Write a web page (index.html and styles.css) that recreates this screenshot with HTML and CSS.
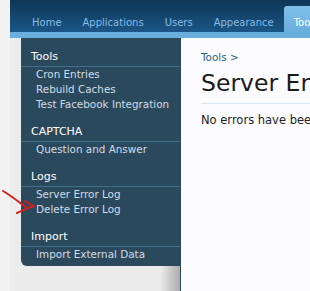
FILE: index.html
```html
<!DOCTYPE html>
<html lang="en">
<head>
    <meta charset="UTF-8">
    <title>Server Error Log</title>
    <link rel="stylesheet" href="styles.css">
</head>
<body>
    <div class="page">
        <nav class="tabs">
            <a class="tab">Home</a>
            <a class="tab">Applications</a>
            <a class="tab">Users</a>
            <a class="tab">Appearance</a>
            <a class="tab active">Tools</a>
        </nav>
        <div class="strip"></div>

        <div class="main">
            <aside class="sidebar">
                <h3>Tools</h3>
                <ul>
                    <li>Cron Entries</li>
                    <li>Rebuild Caches</li>
                    <li>Test Facebook Integration</li>
                </ul>
                <h3>CAPTCHA</h3>
                <ul>
                    <li>Question and Answer</li>
                </ul>
                <h3>Logs</h3>
                <ul>
                    <li>Server Error Log</li>
                    <li>Delete Error Log</li>
                </ul>
                <h3>Import</h3>
                <ul>
                    <li>Import External Data</li>
                </ul>
            </aside>
            <section class="content">
                <div class="crumbs">Tools &gt;</div>
                <h1>Server Error Log</h1>
                <p>No errors have been logged.</p>
            </section>
        </div>
    </div>

    <svg class="arrow" width="40" height="32" viewBox="0 0 40 32">
        <path d="M2 2 C9 6 18 13 26 19" fill="none" stroke="#d41f1a" stroke-width="2" stroke-linecap="round"/>
        <path d="M24 12 C27 14 30 16 33 17 C28 19 22 21 16 24" fill="none" stroke="#d41f1a" stroke-width="2" stroke-linecap="round" stroke-linejoin="round"/>
    </svg>
</body>
</html>
```

FILE: styles.css
```css
body {
  margin: 0;
  background: #f2f2f2;
  font-family: "DejaVu Sans", Tahoma, sans-serif;
  overflow: hidden;
}
.page {
  margin-left: 10px;
  height: 291px;
  display: flex;
  flex-direction: column;
}
.tabs {
  height: 32px;
  display: flex;
  align-items: flex-end;
  padding-left: 22px;
  background: linear-gradient(#0f3656, #1a5686);
  white-space: nowrap;
  overflow: hidden;
}
.tab {
  color: #86bde6;
  font-size: 10px;
  line-height: 13px;
  padding: 0 0 3px;
  margin-right: 21px;
}
.tab.active {
  background: linear-gradient(#80bfea, #6aaede);
  color: #fff;
  padding: 10px 10px 3px;
  margin-left: -11px;
  border-radius: 3px 0 0 0;
}
.strip {
  height: 6px;
  background: #6aaede;
}
.main {
  flex: 1;
  display: flex;
  background: linear-gradient(to right, #ececec 0, #ececec 150px, #a8a8a8 171px);
}
.sidebar {
  margin-left: 11px;
  width: 159px;
  align-self: flex-start;
  background: #2b495c;
  border-radius: 0 0 0 6px;
  padding: 12px 0 4px;
  color: #fff;
}
.sidebar h3 {
  margin: 0;
  padding: 0 0 2px 10px;
  font-size: 11px;
  line-height: 14px;
  font-weight: normal;
  border-bottom: 1px solid #3f6f8c;
}
.sidebar ul {
  list-style: none;
  margin: 0 0 13px;
  padding: 0 0 0 15px;
}
.sidebar ul:last-child {
  margin-bottom: 0;
}
.sidebar li {
  color: #cfdde8;
  font-size: 10.4px;
  line-height: 15px;
}
.content {
  flex: 1;
  background: #fcfcff;
  border-left: 1px solid #2b495c;
  padding: 13px 0 0 20px;
  white-space: nowrap;
  overflow: hidden;
}
.crumbs {
  color: #2b5f83;
  font-size: 10.4px;
  line-height: 13px;
}
.content h1 {
  margin: 4px 0 0;
  padding-bottom: 5px;
  font-size: 23.5px;
  line-height: 30px;
  font-weight: normal;
  color: #1a1a1a;
  border-bottom: 1px solid #d6e6f2;
}
.content p {
  margin: 9px 0 0;
  font-size: 11.5px;
  color: #222;
}
.arrow {
  position: absolute;
  left: 1px;
  top: 189px;
}
```
